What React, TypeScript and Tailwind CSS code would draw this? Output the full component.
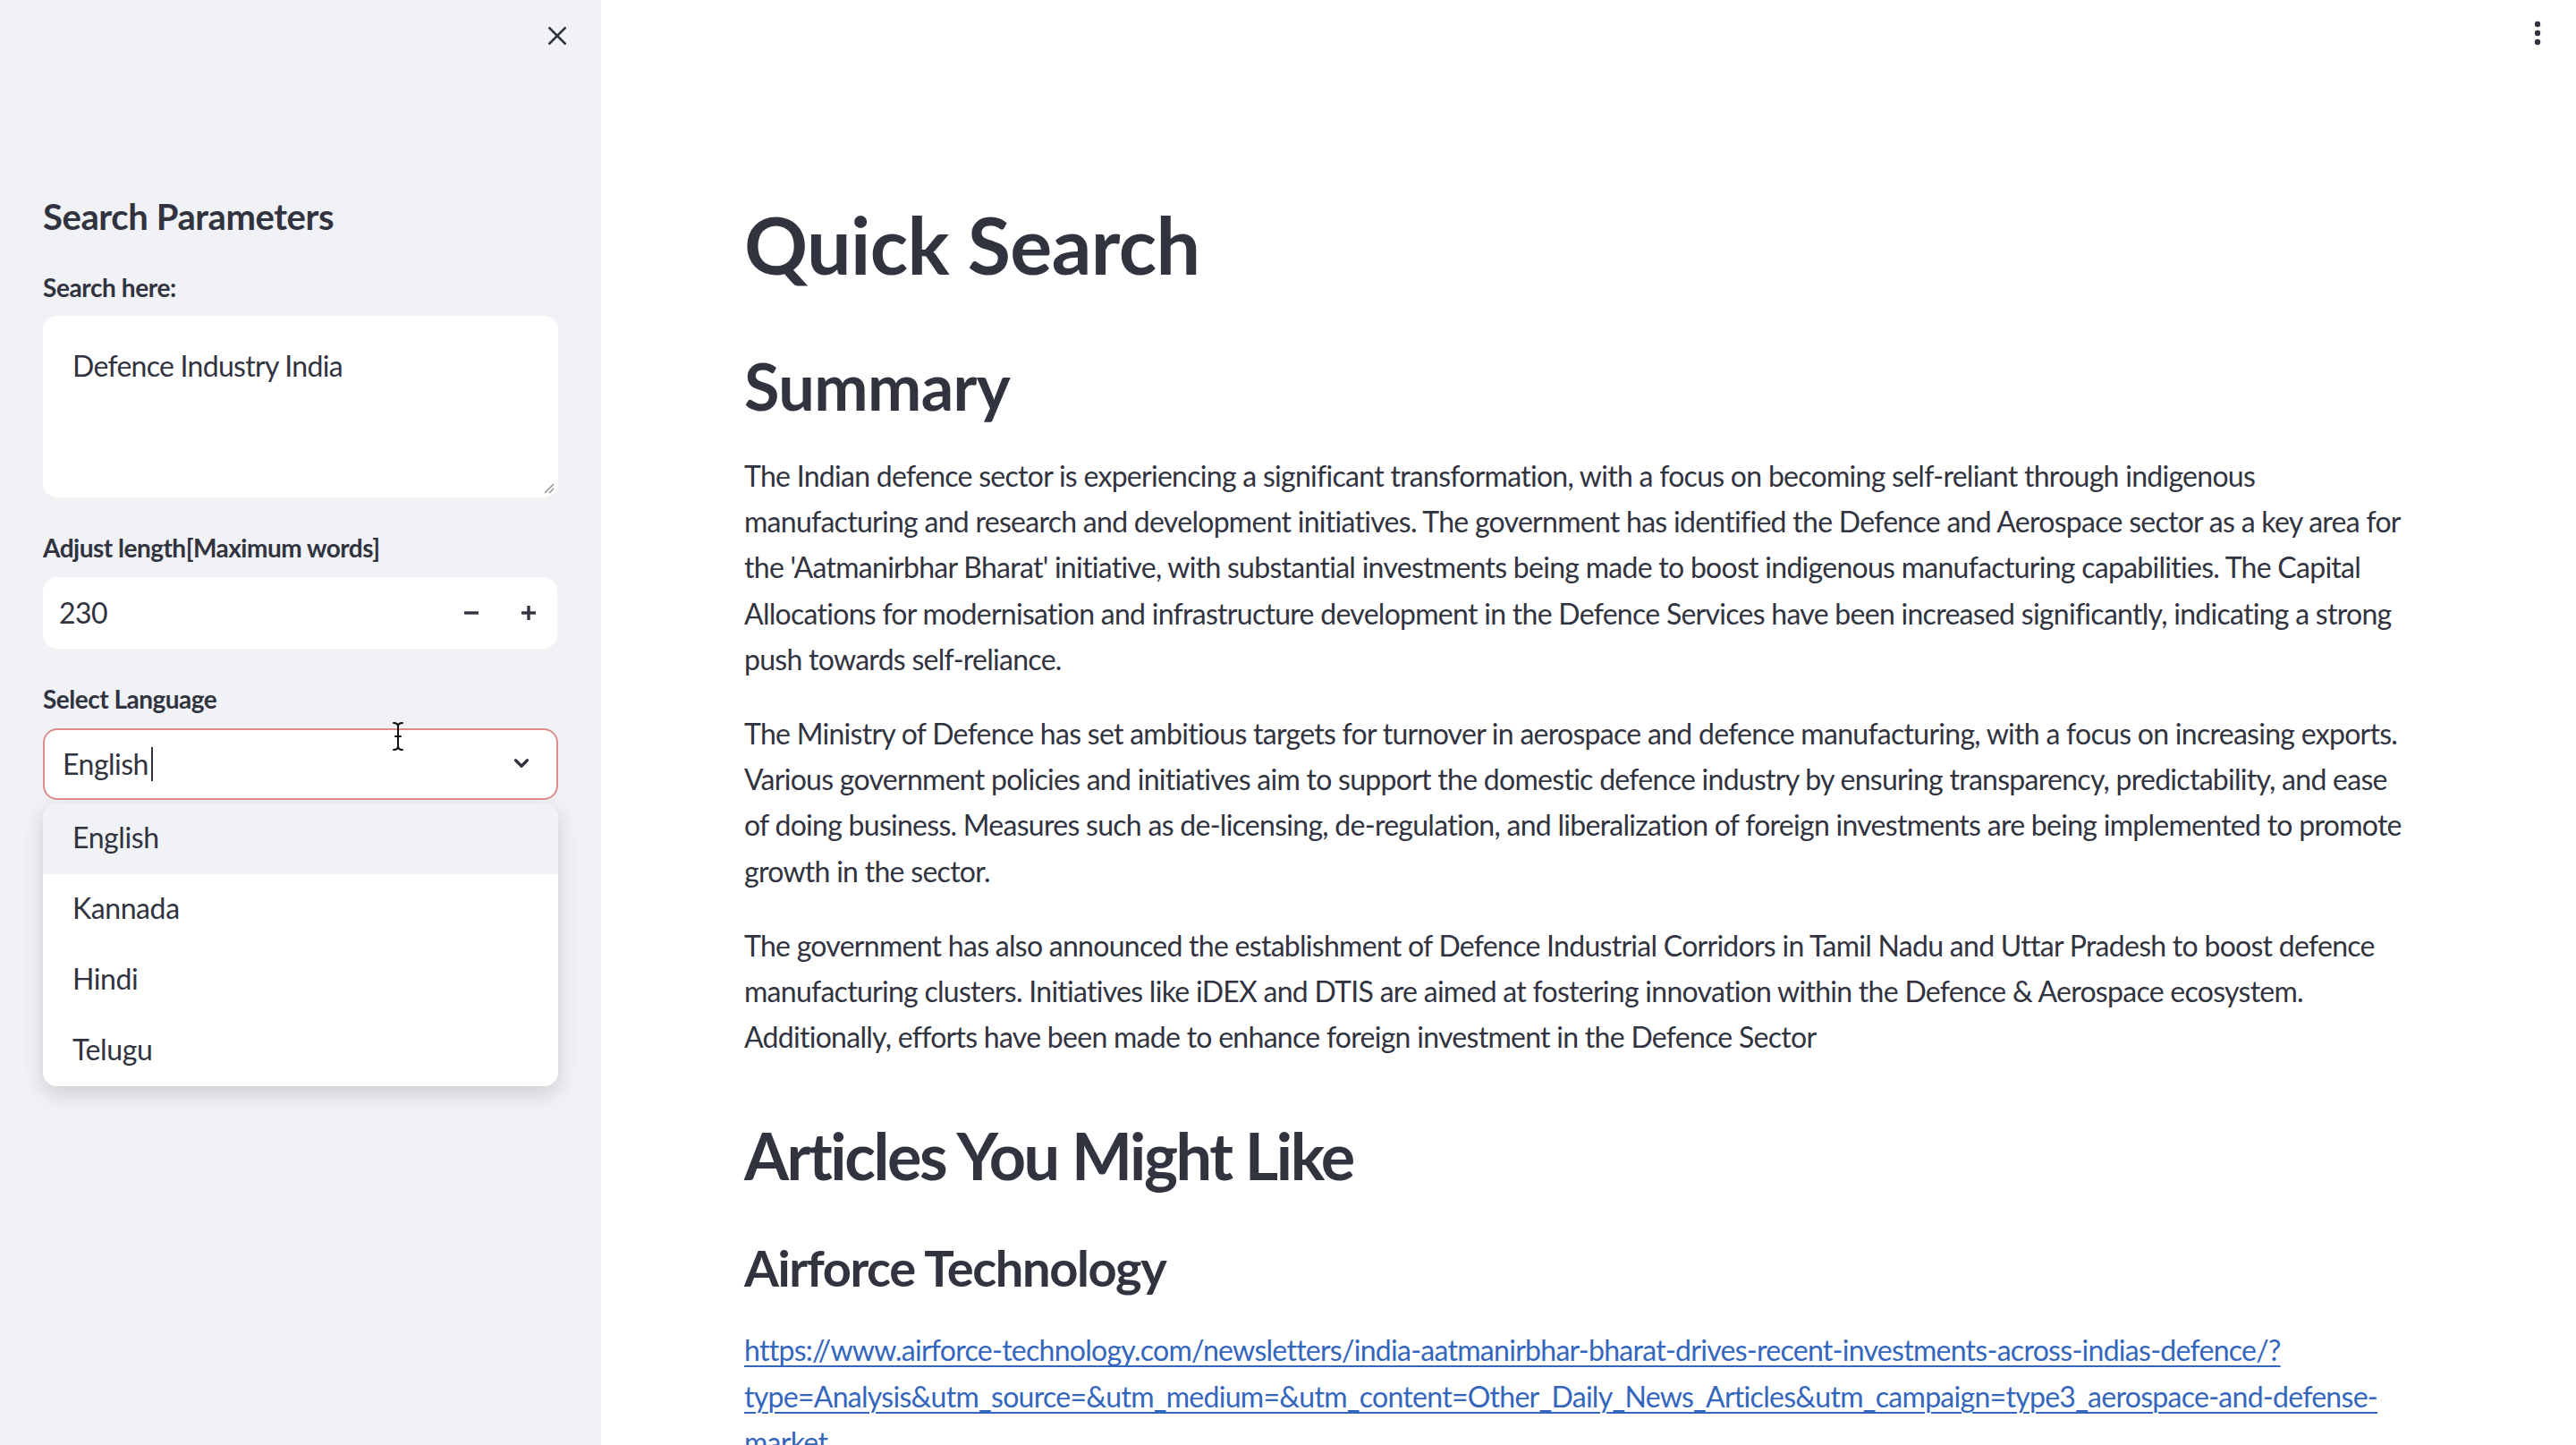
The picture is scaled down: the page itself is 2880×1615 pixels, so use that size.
import React from "react";

const FONT = { fontFamily: "Lato, 'Noto Sans', sans-serif" };

function CloseIcon() {
  return (
    <svg width="30" height="30" viewBox="0 0 24 24" fill="none" stroke="#31333f" strokeWidth="2" strokeLinecap="round">
      <path d="M5 5 L19 19" />
      <path d="M19 5 L5 19" />
    </svg>
  );
}

function Kebab() {
  return (
    <svg width="10" height="30" viewBox="0 0 10 30" fill="#31333f">
      <circle cx="5" cy="5" r="3.2" />
      <circle cx="5" cy="15" r="3.2" />
      <circle cx="5" cy="25" r="3.2" />
    </svg>
  );
}

function Chevron() {
  return (
    <svg width="26" height="26" viewBox="0 0 24 24" fill="none" stroke="#31333f" strokeWidth="3" strokeLinecap="round" strokeLinejoin="round">
      <path d="M6 9 L12 15 L18 9" />
    </svg>
  );
}

function Minus() {
  return (
    <svg width="20" height="20" viewBox="0 0 20 20" stroke="#31333f" strokeWidth="3.4">
      <path d="M2 10 L18 10" />
    </svg>
  );
}

function Plus() {
  return (
    <svg width="20" height="20" viewBox="0 0 20 20" stroke="#31333f" strokeWidth="3.4">
      <path d="M2 10 L18 10" />
      <path d="M10 2 L10 18" />
    </svg>
  );
}

function Grip() {
  return (
    <svg width="14" height="14" viewBox="0 0 14 14" stroke="#8a8c94" strokeWidth="1.4">
      <path d="M13 3 L3 13" />
      <path d="M13 8 L8 13" />
    </svg>
  );
}

function IBeam() {
  return (
    <svg width="16" height="34" viewBox="0 0 16 34" fill="none" stroke="#111" strokeWidth="2" strokeLinecap="round">
      <path d="M3 2 Q8 2 8 6 L8 28 Q8 32 3 32" />
      <path d="M13 2 Q8 2 8 6" />
      <path d="M13 32 Q8 32 8 28" />
      <path d="M5 17 L11 17" />
    </svg>
  );
}

const para1 = [
  "The Indian defence sector is experiencing a significant transformation, with a focus on becoming self-reliant through indigenous",
  "manufacturing and research and development initiatives. The government has identified the Defence and Aerospace sector as a key area for",
  "the 'Aatmanirbhar Bharat' initiative, with substantial investments being made to boost indigenous manufacturing capabilities. The Capital",
  "Allocations for modernisation and infrastructure development in the Defence Services have been increased significantly, indicating a strong",
  "push towards self-reliance.",
];
const para2 = [
  "The Ministry of Defence has set ambitious targets for turnover in aerospace and defence manufacturing, with a focus on increasing exports.",
  "Various government policies and initiatives aim to support the domestic defence industry by ensuring transparency, predictability, and ease",
  "of doing business. Measures such as de-licensing, de-regulation, and liberalization of foreign investments are being implemented to promote",
  "growth in the sector.",
];
const para3 = [
  "The government has also announced the establishment of Defence Industrial Corridors in Tamil Nadu and Uttar Pradesh to boost defence",
  "manufacturing clusters. Initiatives like iDEX and DTIS are aimed at fostering innovation within the Defence & Aerospace ecosystem.",
  "Additionally, efforts have been made to enhance foreign investment in the Defence Sector",
];
const link = [
  "https://www.airforce-technology.com/newsletters/india-aatmanirbhar-bharat-drives-recent-investments-across-indias-defence/?",
  "type=Analysis&utm_source=&utm_medium=&utm_content=Other_Daily_News_Articles&utm_campaign=type3_aerospace-and-defense-",
  "market",
];

function Para({ lines, className }: { lines: string[]; className?: string }) {
  return (
    <p className={"text-[32px] leading-[51.2px] text-[#31333f] tracking-[-0.72px] " + (className ?? "")}>
      {lines.map((l, i) => (
        <span key={i} className="block whitespace-nowrap">
          {l}
        </span>
      ))}
    </p>
  );
}

export default function App() {
  return (
    <div className="flex h-[1615px] w-[2880px] overflow-hidden bg-white" style={FONT}>
      {/* Sidebar */}
      <aside className="relative flex h-full w-[672px] shrink-0 flex-col bg-[#f0f2f6] px-[48px]">
        <button className="absolute left-[608px] top-[25px]">
          <CloseIcon />
        </button>
        <h2 className="mt-[217px] text-[40px] font-bold leading-[50px] text-[#31333f] tracking-[-0.4px]">Search Parameters</h2>

        <label className="mt-[32px] text-[28px] font-bold leading-[45px] text-[#31333f] tracking-[-0.4px]">Search here:</label>
        <div className="relative mt-[9px] h-[203px] w-[576px] rounded-[16px] bg-white px-[33px] pt-[30px]">
          <span className="text-[32px] leading-[51px] text-[#31333f] tracking-[-0.72px]">Defence Industry India</span>
          <span className="absolute bottom-[4px] right-[4px]">
            <Grip />
          </span>
        </div>

        <label className="mt-[34px] text-[28px] font-bold leading-[45px] text-[#31333f] tracking-[-0.5px]">Adjust length[Maximum words]</label>
        <div className="mt-[10px] flex h-[80px] w-[575px] items-center rounded-[16px] bg-white pl-[18px]">
          <span className="flex-1 text-[32px] text-[#31333f] tracking-[-0.5px]">230</span>
          <span className="flex w-[64px] justify-center">
            <Minus />
          </span>
          <span className="flex w-[64px] justify-center">
            <Plus />
          </span>
        </div>

        <label className="mt-[34px] text-[28px] font-bold leading-[45px] text-[#31333f] tracking-[-0.5px]">Select Language</label>
        <div className="relative mt-[10px] flex h-[80px] w-[576px] items-center rounded-[16px] border-2 border-[#dc8a8a] bg-white pb-[2px] pl-[20px] pr-[26px]">
          <span className="flex-1 text-[32px] text-[#31333f] tracking-[-0.5px]">
            English<span className="ml-[3px] inline-block h-[38px] w-[2px] translate-y-[7px] bg-[#31333f]" />
          </span>
          <Chevron />
          <span className="absolute left-[387px] top-[-10px]">
            <IBeam />
          </span>
        </div>

        <div className="mt-[4px] w-[576px] overflow-hidden rounded-[16px] bg-white shadow-[0_8px_24px_rgba(0,0,0,0.16)]">
          {["English", "Kannada", "Hindi", "Telugu"].map((o, i) => (
            <div
              key={o}
              className={
                "flex h-[79px] items-center pb-[4px] pl-[33px] text-[32px] text-[#31333f] tracking-[-0.4px] " +
                (i === 0 ? "bg-[#f0f2f6]" : "bg-white")
              }
            >
              {o}
            </div>
          ))}
        </div>
      </aside>

      {/* Main */}
      <main className="relative flex-1 pl-[160px]">
        <div className="absolute right-[38px] top-[22px]">
          <Kebab />
        </div>
        <h1 className="mt-[220px] text-[88px] font-bold leading-[106px] text-[#31333f] tracking-[-0.6px]">Quick Search</h1>
        <h2 className="mt-[62px] text-[72px] font-bold leading-[86px] text-[#31333f] tracking-[-0.6px]">Summary</h2>
        <Para lines={para1} className="mt-[32px]" />
        <Para lines={para2} className="mt-[32px]" />
        <Para lines={para3} className="mt-[32px]" />
        <h2 className="mt-[64px] text-[72px] font-bold leading-[86px] text-[#31333f] tracking-[-2.4px]">Articles You Might Like</h2>
        <h3 className="mt-[49px] text-[56px] font-bold leading-[67px] text-[#31333f] tracking-[-1.4px]">Airforce Technology</h3>
        <p className="mt-[33px] text-[32px] leading-[51.2px] tracking-[-0.72px]">
          <a href="#" className="text-[#3466bd] underline decoration-[2px] underline-offset-[5px]">
            {link.map((l, i) => (
              <span key={i} className="block whitespace-nowrap">
                {l}
              </span>
            ))}
          </a>
        </p>
      </main>
    </div>
  );
}
